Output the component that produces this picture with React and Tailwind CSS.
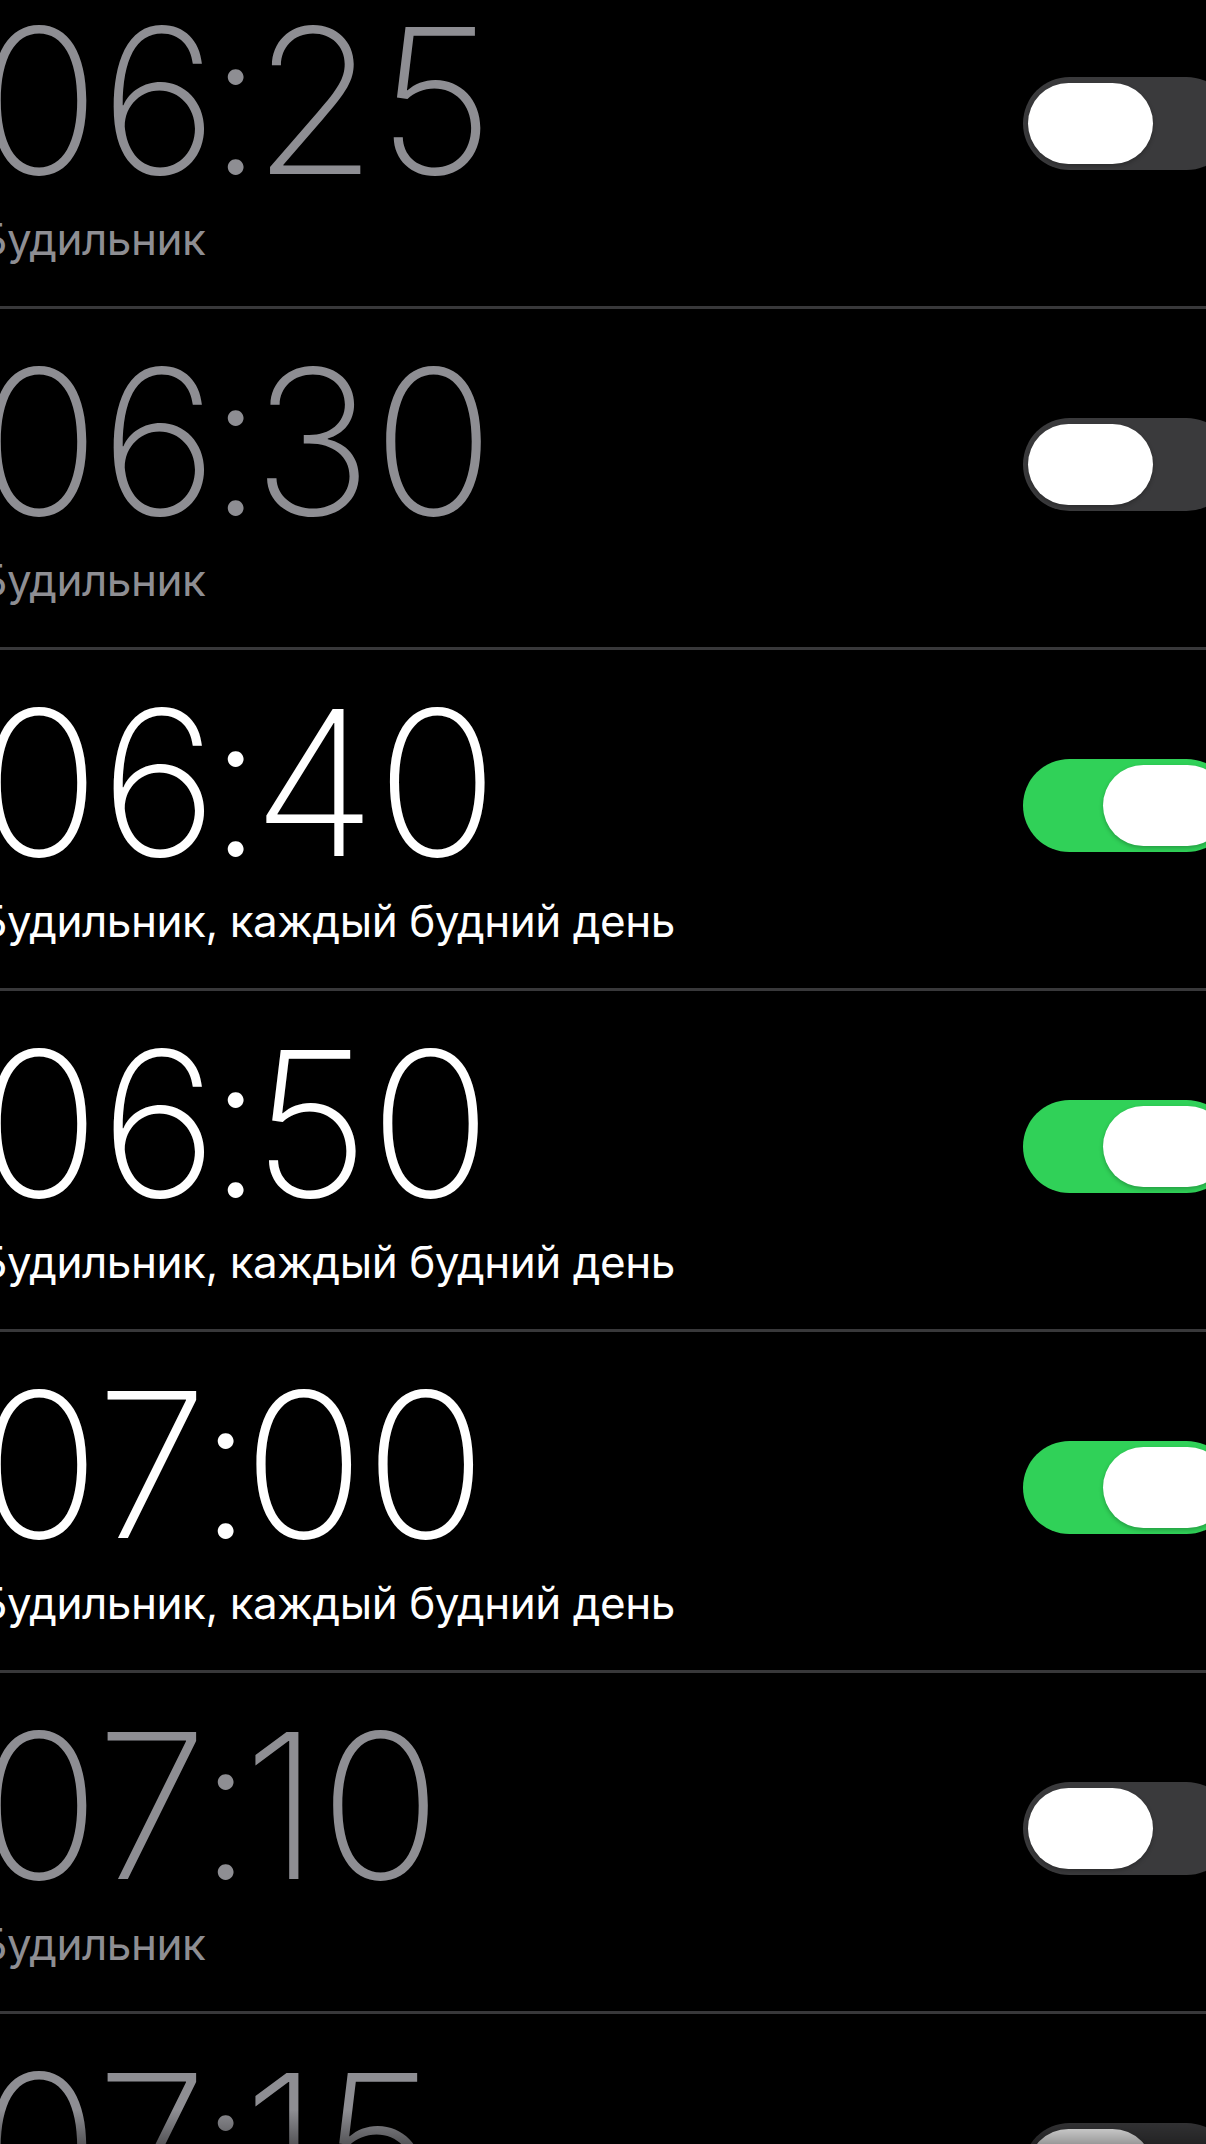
import React from "react";

const alarms = [
  { time: "06:25", label: "Будильник", on: false },
  { time: "06:30", label: "Будильник", on: false },
  { time: "06:40", label: "Будильник, каждый будний день", on: true },
  { time: "06:50", label: "Будильник, каждый будний день", on: true },
  { time: "07:00", label: "Будильник, каждый будний день", on: true },
  { time: "07:10", label: "Будильник", on: false },
  { time: "07:15", label: "Будильник", on: false },
];

function Toggle({ on }) {
  return (
    <div
      className={
        "flex h-[93px] w-[210px] items-center rounded-full px-[5px] " +
        (on ? "justify-end bg-[#30d158]" : "justify-start bg-[#3a3a3c]")
      }
    >
      <div className="h-[81px] w-[125px] rounded-full bg-white shadow-[0_2px_4px_rgba(0,0,0,0.25)]" />
    </div>
  );
}

function Row({ time, label, on }) {
  const color = on ? "text-white" : "text-[#8e8e93]";
  const [h, m] = time.split(":");
  return (
    <div className="flex h-[341px] justify-between border-b-[3px] border-[#38383a]">
      <div className="flex flex-col pt-[32px]">
        <div
          className={
            "-ml-[22px] whitespace-nowrap text-[202px] font-[250] leading-[202px] " +
            color
          }
          style={{ fontFamily: "Inter, 'Noto Sans', sans-serif" }}
        >
          {h}
          <span className="ml-[-10px] mr-[-11px]">:</span>
          {m}
        </div>
        <div
          className={
            "-ml-[21px] mt-[10px] whitespace-nowrap text-[44px] font-normal leading-[54px] tracking-[-0.45px] " +
            color
          }
          style={{ fontFamily: "Inter, 'Noto Sans', sans-serif" }}
        >
          {label}
        </div>
      </div>
      <div className="-mr-[27px] pt-[109px]">
        <Toggle on={on} />
      </div>
    </div>
  );
}

export default function App() {
  return (
    <div className="relative h-[2144px] w-full overflow-hidden bg-black">
      <div className="-mt-[32px] flex flex-col">
        {alarms.map((a) => (
          <Row key={a.time} {...a} />
        ))}
      </div>
      <div className="pointer-events-none absolute bottom-0 left-0 right-0 h-[34px] bg-gradient-to-t from-black/40 to-transparent" />
    </div>
  );
}
